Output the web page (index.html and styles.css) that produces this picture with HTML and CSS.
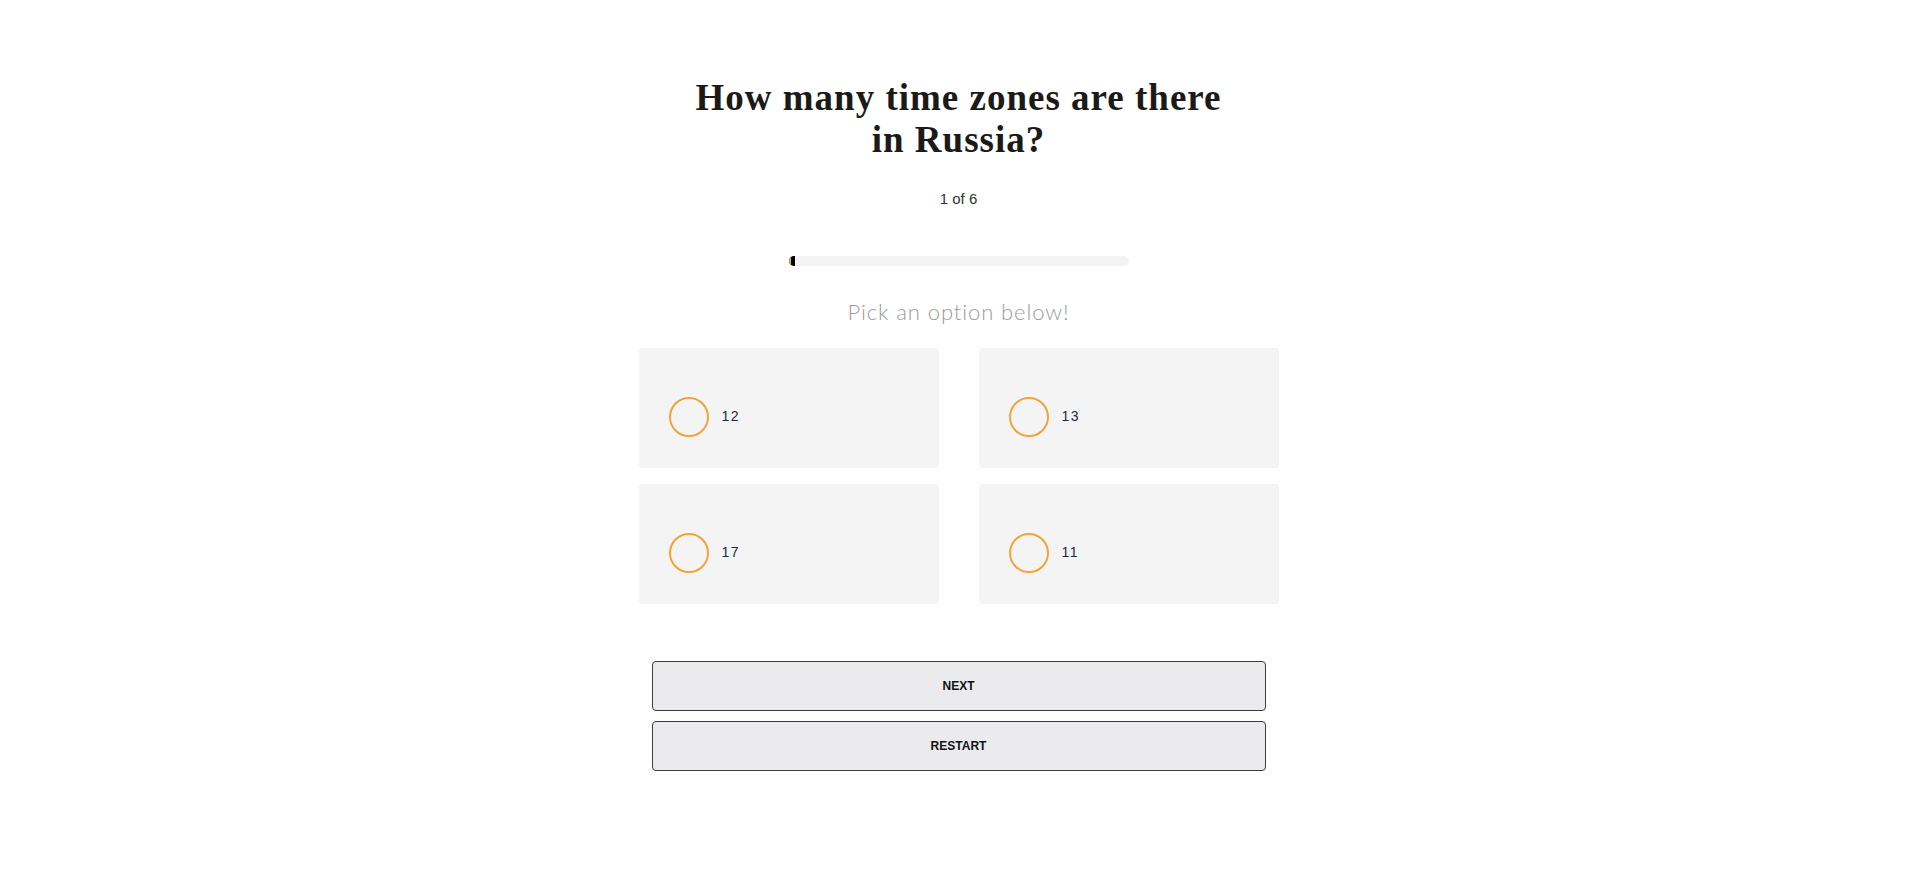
FILE: index.html
```html
<!DOCTYPE html>
<html lang="en">
<head>
<meta charset="utf-8">
<title>Quiz</title>
<link rel="stylesheet" href="styles.css">
</head>
<body>
<main class="quiz">
  <h1 class="question">How many time zones are there in Russia?</h1>
  <div class="counter">1 of 6</div>
  <div class="progress"><div class="progress-fill" style="width: 4px"></div></div>
  <p class="hint">Pick an option below!</p>
  <div class="options">
    <label class="option"><span class="radio"></span><span class="option-text">12</span></label>
    <label class="option"><span class="radio"></span><span class="option-text">13</span></label>
    <label class="option"><span class="radio"></span><span class="option-text">17</span></label>
    <label class="option"><span class="radio"></span><span class="option-text">11</span></label>
  </div>
  <div class="actions">
    <button class="btn">NEXT</button>
    <button class="btn">RESTART</button>
  </div>
</main>
</body>
</html>
```
FILE: styles.css
```css
html, body {
  margin: 0;
  padding: 0;
  background: #ffffff;
}

.quiz {
  display: flex;
  flex-direction: column;
  align-items: center;
  padding-top: 77px;
}

.question {
  margin: 0;
  width: 550px;
  text-align: center;
  font-family: "Liberation Serif", "DejaVu Serif", serif;
  font-weight: 700;
  font-size: 37px;
  line-height: 42px;
  letter-spacing: 1px;
  color: #1c1a18;
}

.counter {
  margin-top: 28px;
  font-family: "Liberation Sans", Arial, sans-serif;
  font-size: 15px;
  line-height: 20px;
  color: #333333;
}

.progress {
  margin-top: 47px;
  width: 340px;
  height: 10px;
  border-radius: 5px;
  background: #f3f3f3;
  overflow: hidden;
  display: flex;
}

.progress-fill {
  height: 100%;
  background: #000000;
  border-left: 2px solid #f0a43a;
}

.hint {
  margin: 31px 0 0;
  font-family: "Lato", "Open Sans", sans-serif;
  font-weight: 300;
  font-size: 22px;
  line-height: 30px;
  letter-spacing: 0.9px;
  color: #9c9c9c;
}

.options {
  margin-top: 21px;
  display: grid;
  grid-template-columns: 300px 300px;
  column-gap: 40px;
  row-gap: 16px;
}

.option {
  height: 120px;
  box-sizing: border-box;
  padding: 49px 0 0 30px;
  background: #f4f4f4;
  border-radius: 4px;
  display: flex;
  align-items: flex-start;
  cursor: pointer;
}

.radio {
  width: 40px;
  height: 40px;
  box-sizing: border-box;
  border: 2px solid #f0a43a;
  border-radius: 50%;
  flex: none;
}

.option-text {
  margin-left: 13px;
  line-height: 38px;
  font-family: "Liberation Sans", Arial, sans-serif;
  font-size: 14px;
  letter-spacing: 1.5px;
  color: #1e2a3a;
}

.actions {
  margin-top: 57px;
  display: flex;
  flex-direction: column;
  gap: 10px;
}

.btn {
  width: 614px;
  height: 50px;
  box-sizing: border-box;
  border: 1px solid #3c3b4a;
  border-radius: 4px;
  background: #ebebee;
  font-family: "Liberation Sans", Arial, sans-serif;
  font-weight: 700;
  font-size: 12px;
  color: #111111;
  cursor: pointer;
  padding: 0;
}
```
